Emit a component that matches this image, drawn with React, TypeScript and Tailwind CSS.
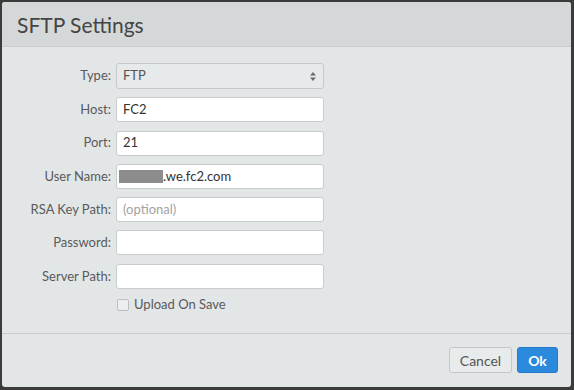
import React from "react";

const rows: { label: string; value?: string; placeholder?: string; kind?: string }[] = [
  { label: "Host:", value: "FC2" },
  { label: "Port:", value: "21" },
  { label: "User Name:", kind: "user" },
  { label: "RSA Key Path:", placeholder: "(optional)" },
  { label: "Password:" },
  { label: "Server Path:" },
];

export default function App() {
  return (
    <div
      className="w-[574px] h-[390px] bg-[#3b3b3b] pt-[2px] pl-[2px] overflow-hidden"
      style={{ fontFamily: "Lato, 'Open Sans', sans-serif" }}
    >
      <div className="w-[569px] h-[385px] bg-[#e3e6e7] rounded-[3px] flex flex-col overflow-hidden">
        <div className="h-[45px] bg-[#d4d8d9] border-b border-[#c9cdce] flex items-center pl-[15px]">
          <span className="text-[21px] text-[#454545] leading-none mt-[1px]">SFTP Settings</span>
        </div>
        <div className="flex flex-col gap-[8.3px] pt-[16px] text-[13px]">
          <div className="flex items-center">
            <div className="w-[109px] text-right text-[#5a5a5a]">Type:</div>
            <div className="ml-[5px] w-[208px] h-[26px] bg-[#e7eaeb] border border-[#c5c9ca] rounded-[3px] flex items-center justify-between pl-[6px] pr-[6px] text-[#555]">
              <span>FTP</span>
              <svg width="8" height="11" viewBox="0 0 8 11">
                <path d="M4 1 L7 4.5 L1 4.5 Z" fill="#6a6a6a" />
                <path d="M4 10 L7 6.5 L1 6.5 Z" fill="#6a6a6a" />
              </svg>
            </div>
          </div>
          {rows.map((r) => (
            <div key={r.label} className="flex items-center">
              <div className="w-[109px] text-right text-[#5a5a5a]">{r.label}</div>
              <div className="ml-[5px] w-[208px] h-[25px] bg-white border border-[#c8cccd] rounded-[3px] flex items-center pl-[6px] text-[#333]">
                {r.kind === "user" ? (
                  <>
                    <span className="inline-block w-[44px] h-[13px] bg-[#8c8c8c] -ml-[4px]" />
                    <span>.we.fc2.com</span>
                  </>
                ) : r.placeholder ? (
                  <span className="text-[#a3a3a3]">{r.placeholder}</span>
                ) : (
                  <span>{r.value ?? ""}</span>
                )}
              </div>
            </div>
          ))}
          <div className="flex items-center pl-[115px] -mt-[2px]">
            <span className="w-[12px] h-[12px] border border-[#bcc0c1] bg-[#eceeef] rounded-[2px]" />
            <span className="ml-[5px] text-[#5a5a5a]">Upload On Save</span>
          </div>
        </div>
        <div className="mt-auto border-t border-[#c8cccd] h-[54px] flex items-start justify-end pt-[13px] pr-[13px] gap-[5px]">
          <button className="w-[63px] h-[26px] bg-[#e8ebeb] border border-[#c3c7c8] rounded-[3px] text-[14px] text-[#555]">
            Cancel
          </button>
          <button className="w-[41px] h-[26px] bg-[#2b89de] border border-[#2479c6] rounded-[3px] text-[14px] font-bold text-white">
            Ok
          </button>
        </div>
      </div>
    </div>
  );
}
